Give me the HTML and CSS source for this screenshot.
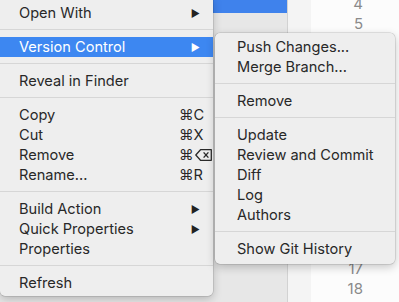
FILE: index.html
```html
<!DOCTYPE html>
<html>
<head>
<meta charset="utf-8">
<link rel="stylesheet" href="styles.css">
</head>
<body>
<div class="window">
  <div class="sidebar">
    <div class="sel-row"></div>
  </div>
  <div class="gutter-strip"></div>
  <div class="editor">
    <div class="lines">
      <div>4</div><div>5</div><div class="covered"></div><div class="covered"></div><div class="covered"></div><div class="covered"></div><div class="covered"></div><div class="covered"></div><div class="covered"></div><div class="covered"></div><div class="covered"></div><div class="covered"></div><div class="covered"></div><div>17</div><div>18</div>
    </div>
  </div>
</div>

<div class="menu main-menu">
  <div class="item"><span>Open With</span><span class="arrow">&#9654;</span></div>
  <div class="sep"></div>
  <div class="item active"><span>Version Control</span><span class="arrow">&#9654;</span></div>
  <div class="sep"></div>
  <div class="item"><span>Reveal in Finder</span></div>
  <div class="sep"></div>
  <div class="item"><span>Copy</span><span class="key">&#8984;C</span></div>
  <div class="item"><span>Cut</span><span class="key">&#8984;X</span></div>
  <div class="item"><span>Remove</span><span class="key">&#8984;<svg class="del" width="17" height="12" viewBox="0 0 17 12"><path d="M5.5 0.7 H16.3 V11.3 H5.5 L0.8 6 Z" fill="none" stroke="#2a2a2a" stroke-width="1.3" stroke-linejoin="round"/><path d="M8.6 3.4 L13.4 8.6 M13.4 3.4 L8.6 8.6" stroke="#2a2a2a" stroke-width="1.4"/></svg></span></div>
  <div class="item"><span>Rename...</span><span class="key">&#8984;R</span></div>
  <div class="sep"></div>
  <div class="item"><span>Build Action</span><span class="arrow">&#9654;</span></div>
  <div class="item"><span>Quick Properties</span><span class="arrow">&#9654;</span></div>
  <div class="item"><span>Properties</span></div>
  <div class="sep"></div>
  <div class="item"><span>Refresh</span></div>
</div>

<div class="menu sub-menu">
  <div class="item"><span>Push Changes...</span></div>
  <div class="item"><span>Merge Branch...</span></div>
  <div class="sep"></div>
  <div class="item"><span>Remove</span></div>
  <div class="sep"></div>
  <div class="item"><span>Update</span></div>
  <div class="item"><span>Review and Commit</span></div>
  <div class="item"><span>Diff</span></div>
  <div class="item"><span>Log</span></div>
  <div class="item"><span>Authors</span></div>
  <div class="sep"></div>
  <div class="item"><span>Show Git History</span></div>
</div>
</body>
</html>
```
FILE: styles.css
```css
html, body {
  margin: 0;
  padding: 0;
}
body {
  width: 399px;
  height: 302px;
  overflow: hidden;
  position: relative;
  font-family: Inter, "Liberation Sans", sans-serif;
  font-size: 14.6px;
  color: #282828;
}
.window {
  display: flex;
  height: 302px;
}
.sidebar {
  width: 287px;
  background: #e7e7e7;
  border-right: 1px solid #d2d2d2;
}
.sel-row {
  height: 13px;
  background: #3f82ec;
}
.gutter-strip {
  width: 23px;
  background: #f4f4f4;
}
.editor {
  flex: 1;
  background: #fcfcfc;
}
.lines {
  width: 52px;
  margin-top: -6px;
  text-align: right;
  color: #8a8a8a;
  line-height: 20.36px;
  font-size: 15px;
}
.covered {
  height: 20.36px;
}
.menu {
  position: absolute;
  background: #eeeeee;
  box-shadow: 0 0 0 0.5px rgba(0,0,0,0.18), 0 3px 10px rgba(0,0,0,0.22);
}
.main-menu {
  left: 0;
  top: -2px;
  width: 213px;
  padding: 5px 0 3px;
  border-radius: 0 0 5px 5px;
}
.sub-menu {
  left: 215px;
  top: 33px;
  width: 180px;
  padding: 4px 0 5px;
  border-radius: 5px;
}
.item {
  height: 20px;
  display: flex;
  align-items: center;
  justify-content: space-between;
  padding: 0 13px 0 19px;
}
.main-menu .item {
  padding-right: 10px;
}
.sub-menu .item {
  padding-left: 22px;
}
.item.active {
  background: #3d87f1;
  color: #fff;
}
.arrow {
  font-size: 10px;
  color: #222;
  margin-right: 3px;
}
.active .arrow {
  color: #fff;
}
.key {
  width: 24px;
  display: flex;
  align-items: center;
  white-space: nowrap;
}
.del {
  margin-left: 1px;
  flex: none;
}
.sep {
  height: 1px;
  background: #d6d6d6;
  margin: 6px 0 7px;
}
```
